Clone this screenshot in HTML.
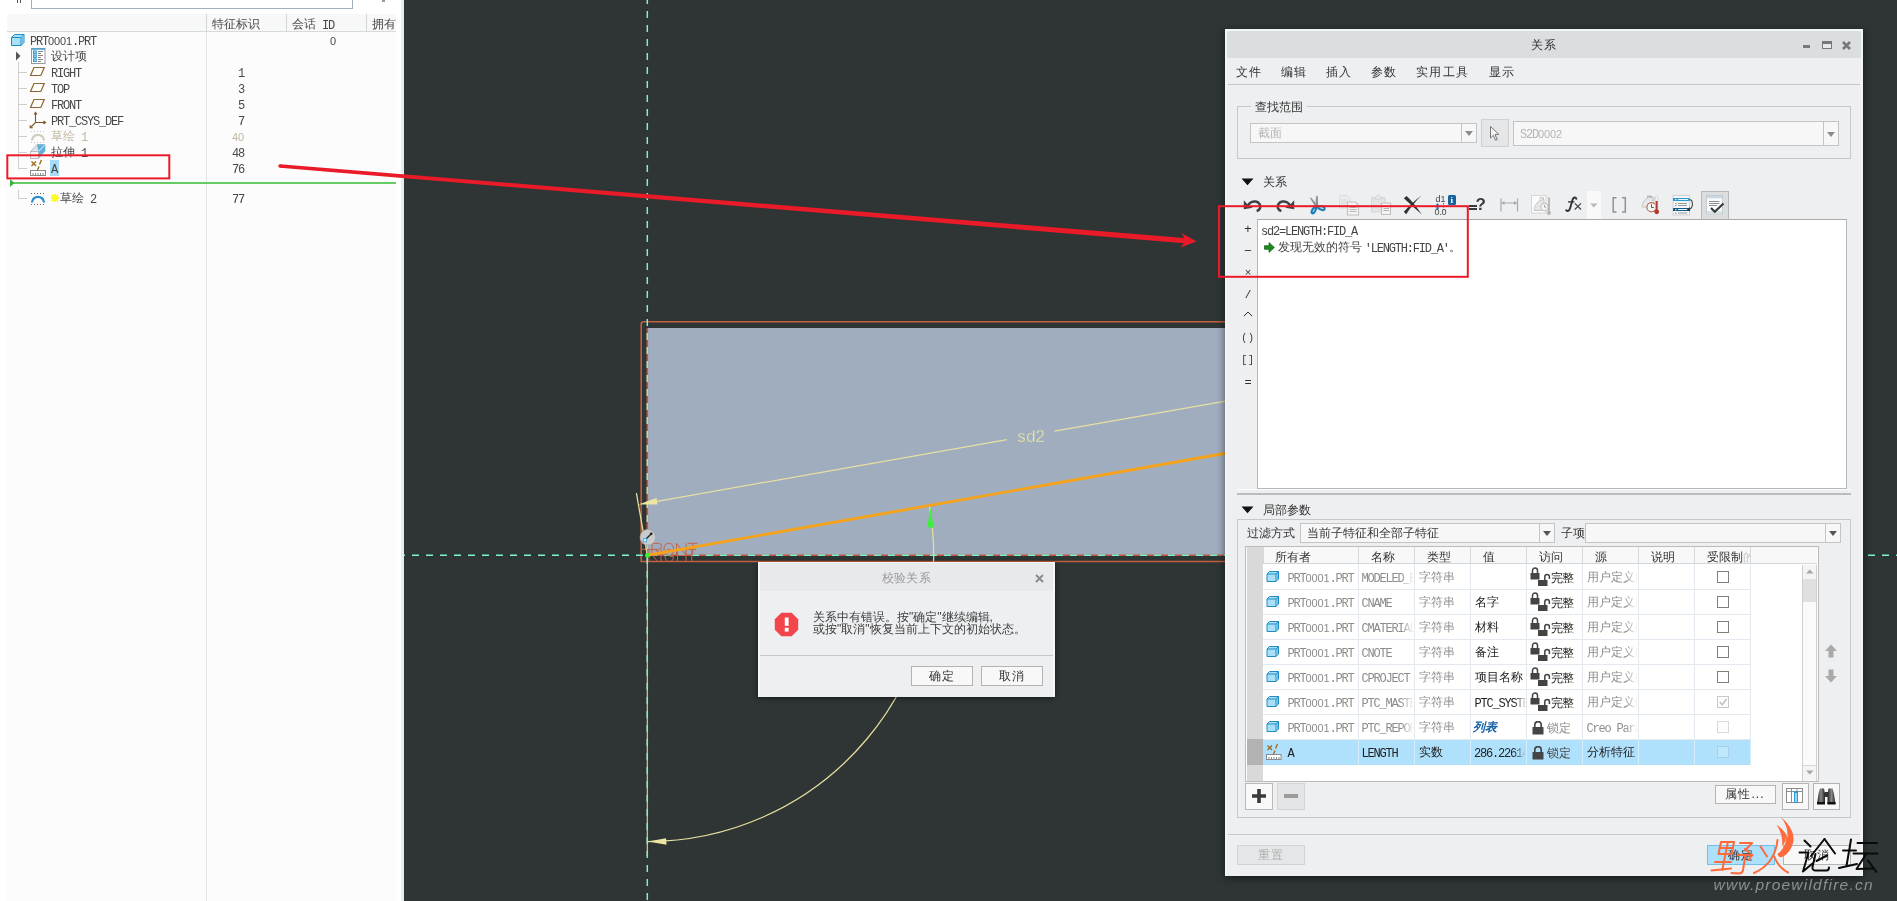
<!DOCTYPE html>
<html lang="zh">
<head>
<meta charset="utf-8">
<title>Creo - 关系</title>
<style>
*{box-sizing:border-box;margin:0;padding:0}
html,body{width:1897px;height:901px;overflow:hidden;background:#2f3535}
body{will-change:transform;position:relative;font-family:"Liberation Sans",sans-serif;font-size:12px;color:#444;line-height:1}
.abs{position:absolute}
.t{position:absolute;white-space:pre;font-size:12px;line-height:14px;height:14px;color:#484848}
/* condensed mono latin run: 6px advance */
.m{position:relative;top:2px;display:inline-block;font-family:"Liberation Mono",monospace;font-size:12px;letter-spacing:-1.2px;white-space:pre;vertical-align:top}
.m i{font-family:"Liberation Sans",sans-serif;font-style:normal;font-size:11px;letter-spacing:-.12px;line-height:0}
.combo .dd.dis:after{border-top-color:#8c8c8c}
/* ---------- left panel ---------- */
#left{position:absolute;left:0;top:0;width:404px;height:901px;background:#fff}
#left .inner{position:absolute;left:7px;top:14px;width:389px;height:887px;background:#fcfcfc}
#left .strip{position:absolute;left:401px;top:0;width:3px;height:901px;background:#e6ecec}
#left .hdr{position:absolute;left:7px;top:14px;width:389px;height:18px;background:#f8f8f8;border-bottom:1px solid #d5dada}
#left .vs{position:absolute;top:14px;width:1px;background:#dde3e6}
/* ---------- dialogs ---------- */
.dlg{position:absolute;background:#eeeff1}
.btn{position:absolute;border:1px solid #b4b4b4;background:#f8f8f8;text-align:center;font-size:12px;color:#333}
.gb{position:absolute;border:1px solid #c6c8ca}
.combo{position:absolute;border:1px solid #c2c4c6;background:#f7f7f7}
.combo .dd{position:absolute;right:0;top:0;bottom:0;width:15px;border-left:1px solid #c2c4c6}
.combo .dd:after{content:"";position:absolute;left:3px;top:50%;margin-top:-2px;border:4px solid transparent;border-top:5px solid #555;border-bottom:0}
</style>
</head>
<body>

<!-- ================= LEFT MODEL TREE ================= -->
<div id="left">
  <div class="inner"></div>
  <div class="strip"></div>
  <!-- top search box remnants -->
  <div class="abs" style="left:31px;top:-10px;width:322px;height:19px;border:1px solid #9db3b8;background:#fff"></div>
  <div class="abs" style="left:17px;top:0;width:1px;height:3px;background:#555"></div>
  <div class="abs" style="left:20px;top:0;width:1px;height:3px;background:#555"></div>
  <div class="abs" style="left:382px;top:0;width:3px;height:2px;background:#999"></div>
  <!-- header -->
  <div class="hdr"></div>
  <div class="vs" style="left:206px;height:887px"></div>
  <div class="vs" style="left:286px;height:18px;background:#d0d6d8"></div>
  <div class="vs" style="left:366px;height:18px;background:#d0d6d8"></div>
  <div class="vs" style="left:206px;height:18px;background:#d0d6d8"></div>
  <div class="t" style="left:212px;top:17px">特征标识</div>
  <div class="t" style="left:292px;top:17px">会话<span class="m"> ID</span></div>
  <div class="t" style="left:372px;top:17px">拥有</div>

  <!-- tree lines -->
  <div class="abs" style="left:18px;top:62px;width:1px;height:107px;background:#cfcfcf"></div>
  <div class="abs" style="left:18px;top:72px;width:9px;height:1px;background:#cfcfcf"></div>
  <div class="abs" style="left:18px;top:88px;width:9px;height:1px;background:#cfcfcf"></div>
  <div class="abs" style="left:18px;top:104px;width:9px;height:1px;background:#cfcfcf"></div>
  <div class="abs" style="left:18px;top:120px;width:9px;height:1px;background:#cfcfcf"></div>
  <div class="abs" style="left:18px;top:136px;width:9px;height:1px;background:#cfcfcf"></div>
  <div class="abs" style="left:18px;top:152px;width:9px;height:1px;background:#cfcfcf"></div>
  <div class="abs" style="left:18px;top:168px;width:9px;height:1px;background:#cfcfcf"></div>
  <div class="abs" style="left:18px;top:190px;width:1px;height:9px;background:#cfcfcf"></div>
  <div class="abs" style="left:18px;top:198px;width:9px;height:1px;background:#cfcfcf"></div>

  <!-- row: PRT0001.PRT -->
  <svg class="abs" style="left:10px;top:33px" width="16" height="14" viewBox="0 0 16 14"><path d="M1.5 4.5 L4.5 1.5 L14 1.5 L14 9.5 L11 12.5 L1.5 12.5 Z" fill="#a9e0f7" stroke="#1f8cc4" stroke-width="1"/><path d="M1.5 4.5 L11 4.5 L14 1.5 M11 4.5 L11 12.5" fill="none" stroke="#1f8cc4" stroke-width="1"/><path d="M11.5 4.6 L13.5 2.6 L13.5 9.3 L11.5 11.3Z" fill="#6cc3ea"/></svg>
  <div class="t" style="left:30px;top:33px"><span class="m">PRT<i>0001</i>.PRT</span></div>
  <div class="t" style="left:330px;top:33px"><span class="m"><i>0</i></span></div>

  <!-- row: 设计项 -->
  <svg class="abs" style="left:15px;top:51px" width="6" height="10" viewBox="0 0 6 10"><path d="M1 0.5 L5.5 5 L1 9.5Z" fill="#555"/></svg>
  <svg class="abs" style="left:31px;top:48px" width="15" height="16" viewBox="0 0 15 16"><rect x="0.5" y="0.5" width="13.5" height="15" fill="#fff" stroke="#9a9a9a"/><rect x="0.5" y="0.5" width="13.5" height="1.2" fill="#2d9bd6"/><g fill="none" stroke="#2d9bd6" stroke-width="1.2"><rect x="2.6" y="3" width="2.6" height="2.4"/><rect x="2.6" y="7" width="2.6" height="2.4"/><rect x="2.6" y="11" width="2.6" height="2.4"/></g><g stroke="#888" stroke-width="1"><path d="M7 3.5h5M7 5.5h3M7 7.5h5M7 9.5h3M7 11.5h5M7 13.5h3"/></g></svg>
  <div class="t" style="left:51px;top:49px">设计项</div>

  <!-- planes -->
  <svg class="abs" style="left:29px;top:66px" width="17" height="11" viewBox="0 0 17 11"><path d="M5 1.5 L15.3 1.5 L11.8 9.5 L1.5 9.5Z" fill="none" stroke="#8a682d" stroke-width="1.2"/></svg>
  <div class="t" style="left:51px;top:65px"><span class="m">RIGHT</span></div>
  <div class="t" style="left:214px;top:65px;width:30px;text-align:right"><span class="m">1</span></div>

  <svg class="abs" style="left:29px;top:82px" width="17" height="11" viewBox="0 0 17 11"><path d="M5 1.5 L15.3 1.5 L11.8 9.5 L1.5 9.5Z" fill="none" stroke="#8a682d" stroke-width="1.2"/></svg>
  <div class="t" style="left:51px;top:81px"><span class="m">TOP</span></div>
  <div class="t" style="left:214px;top:81px;width:30px;text-align:right"><span class="m">3</span></div>

  <svg class="abs" style="left:29px;top:98px" width="17" height="11" viewBox="0 0 17 11"><path d="M5 1.5 L15.3 1.5 L11.8 9.5 L1.5 9.5Z" fill="none" stroke="#8a682d" stroke-width="1.2"/></svg>
  <div class="t" style="left:51px;top:97px"><span class="m">FRONT</span></div>
  <div class="t" style="left:214px;top:97px;width:30px;text-align:right"><span class="m">5</span></div>

  <!-- csys -->
  <svg class="abs" style="left:29px;top:111px" width="18" height="18" viewBox="0 0 18 18"><g fill="none" stroke="#7a5a22" stroke-width="1.1"><path d="M6.5 2 L6.5 11.5 L16 11.5 M6.5 11.5 L1.5 16.5"/><path d="M5 3.5 L6.5 1.5 L8 3.5 M14.5 10 L16.5 11.5 L14.5 13 M1.2 14.2 L1.2 16.8 L3.8 16.8"/></g></svg>
  <div class="t" style="left:51px;top:113px"><span class="m">PRT_CSYS_DEF</span></div>
  <div class="t" style="left:214px;top:113px;width:30px;text-align:right"><span class="m">7</span></div>

  <!-- 草绘 1 (suppressed/greyed) -->
  <svg class="abs" style="left:30px;top:129px" width="16" height="15" viewBox="0 0 16 15"><path d="M1.800 11.500 C3.500 4 12.500 4 14.200 11.500" fill="none" stroke="#d2cdc0" stroke-width="2.200"/><path d="M1 2.5h14M1 13.5h14" stroke="#c8c8c8" stroke-width="1" stroke-dasharray="1 2"/></svg>
  <div class="t" style="left:51px;top:129px;color:#c2b8a2">草绘<span class="m"> 1</span></div>
  <div class="t" style="left:214px;top:129px;width:30px;text-align:right;color:#c2b8a2"><span class="m"><i>40</i></span></div>

  <!-- 拉伸 1 -->
  <svg class="abs" style="left:29px;top:143px" width="17" height="17" viewBox="0 0 17 17"><path d="M1.5 8.5 L8 1.5 L16 1.5 L16 8 L9.5 15.5 L1.5 15.5Z" fill="#dfe4e8" stroke="#b5bcc2"/><path d="M8 1.5 L16 1.5 L16 8 L9.5 15 L9.5 8.5Z" fill="#5fb1d9"/><path d="M1.5 8.5 L9.5 8.5 L16 1.5" fill="none" stroke="#fff" stroke-width=".8"/><rect x="1.5" y="8.5" width="8" height="7" fill="#f3f5f7" stroke="#b5bcc2"/></svg>
  <div class="t" style="left:51px;top:145px">拉伸<span class="m"> 1</span></div>
  <div class="t" style="left:214px;top:145px;width:30px;text-align:right"><span class="m">48</span></div>

  <!-- A (analysis feature, selected) -->
  <svg class="abs" style="left:30px;top:159px" width="17" height="18" viewBox="0 0 17 18"><g stroke="#9a6a1e" stroke-width="1.4" fill="none"><path d="M1.5 2.5 L6 7 M6 2.5 L1.5 7"/><path d="M11.5 1 L9.5 5.5 M9 7.5 L7.5 11"/></g><rect x="0.5" y="11.5" width="15" height="5" fill="#fff" stroke="#8a8a8a"/><path d="M3 14v2.5M5.5 14v2.5M8 14v2.5M10.500 14v2.500M13 14v2.500" stroke="#8a8a8a" stroke-width="1"/></svg>
  <div class="abs" style="left:50px;top:160px;width:9px;height:16px;background:#a6dcf7"></div>
  <div class="t" style="left:51px;top:161px"><span class="m">A</span></div>
  <div class="t" style="left:214px;top:161px;width:30px;text-align:right"><span class="m">76</span></div>

  <!-- insert-here green line -->
  <div class="abs" style="left:10px;top:182px;width:386px;height:2px;background:#68cc64"></div>
  <svg class="abs" style="left:10px;top:179px" width="5" height="8" viewBox="0 0 5 8"><path d="M0 0 L4.500 4 L0 8Z" fill="#3fb43f"/></svg>

  <!-- 草绘 2 -->
  <svg class="abs" style="left:30px;top:191px" width="16" height="15" viewBox="0 0 16 15"><path d="M1.800 11.500 C3.500 4 12.500 4 14.200 11.500" fill="none" stroke="#2d8ecb" stroke-width="2.200"/><path d="M1 2.5h14M1 13.5h14" stroke="#666" stroke-width="1" stroke-dasharray="1 2"/></svg>
  <svg class="abs" style="left:51px;top:194px" width="8" height="8" viewBox="0 0 8 8"><g stroke="#8a8a00" stroke-width="1.600" opacity=".35"><path d="M4 0v8M0 4h8M1 1l6 6M7 1l-6 6"/></g><g stroke="#ffff10" stroke-width="1.600"><path d="M4 0v8M0 4h8M1 1l6 6M7 1l-6 6"/></g></svg>
  <div class="t" style="left:60px;top:191px">草绘<span class="m"> 2</span></div>
  <div class="t" style="left:214px;top:191px;width:30px;text-align:right"><span class="m">77</span></div>
</div>

<!-- ================= CANVAS ================= -->
<svg id="canvas" class="abs" style="left:0;top:0" width="1897" height="901" viewBox="0 0 1897 901">
  <!-- extruded face -->
  <rect x="648" y="328" width="600" height="227.500" fill="#a0adbe"/>
  <!-- sketch reference outline -->
  <path d="M1250 321.700 H643.600 Q641.200 321.700 641.200 324.100 V561.500 H1250" fill="none" stroke="#c0603f" stroke-width="1.600"/>
  <!-- rect edges coincident with datum planes -->
  <path d="M647.300 328 V555.200 H1250" fill="none" stroke="#c4553a" stroke-width="1.600"/>
  <path d="M647.300 555 V856" stroke="#d9d294" stroke-width="1.200"/>
  <!-- datum planes (dashed) -->
  <path d="M647.300 0 V901" fill="none" stroke="#7ff0d0" stroke-width="1.500" stroke-dasharray="7 7" stroke-dashoffset="3"/>
  <path d="M404 555.300 H1897" fill="none" stroke="#7ff0d0" stroke-width="1.500" stroke-dasharray="7 7" stroke-dashoffset="6"/>
  <!-- FRONT / RIGHT datum tags -->
  <g fill="none" stroke="#c4654a" stroke-width="1"><title>FRONT RIGHT</title>
    <path d="M641.5 555.3V543.3H651.0M641.5 549.3H649.0 M652 555.3V543.3H658.5Q661.5 543.3 661.5 546.3Q661.5 549.3 658.5 549.3H652M656.275 549.3L661.5 555.3 M668.75 543.3Q673.5 543.3 673.5 549.3Q673.5 555.3 668.75 555.3Q664 555.3 664 549.3Q664 543.3 668.75 543.3Z M676.5 555.3V543.3L686.0 555.3V543.3 M688 543.3H697.5M692.75 543.3V555.3"/>
    <path d="M649 561.5V549.5H654.5Q657.5 549.5 657.5 552.5Q657.5 555.5 654.5 555.5H649M652.825 555.5L657.5 561.5 M661 549.5V561.5 M673.5 552.5Q672.5 549.5 669.25 549.5Q665 549.5 665 555.5Q665 561.5 669.25 561.5Q673.5 561.5 673.5 556.5H670.25 M677.5 549.5V561.5M686.0 549.5V561.5M677.5 555.5H686.0 M687.5 549.5H696.0M691.75 549.5V561.5"/>
  </g>
  <!-- vertical solid axis segment below origin -->
  <!-- dimension sd2 -->
  <g stroke="#e6e0a0" stroke-width="1.250" fill="none">
    <path d="M647.3 555.2 L636.4 493.2"/>
    <path d="M657.1 501.3 L1007.0 439.6 M1054.5 431.2 L1230.0 400.3"/>
    <path d="M929.3 505.5 A286.3 286.3 0 0 1 647.3 841.5"/>
  </g>
  <path d="M638.4 504.6 L656.5 498.1 L657.6 504.4Z" fill="#ece6a0"/>
  <path d="M647.800 841.400 L666 838.200 L666.600 844.800Z" fill="#ece6a0"/>
  <text x="1017.200 1026.300 1035.600" y="442.400" font-family="Liberation Sans, sans-serif" font-size="16.800" fill="#f2eca2" stroke="#a0adbe" stroke-width=".38">sd2</text>
  <!-- sketched line (selected) -->
  <path d="M647.3 555.2 L1230.0 452.5" stroke="#f5a31c" stroke-width="2.900" stroke-linecap="round"/>
  <!-- green arrow on arc start -->
  <path d="M930.600 507.500 L933.500 528 L927.300 527Z" fill="#3af03a"/>
  <!-- origin point -->
  <circle cx="647.300" cy="555.400" r="2.300" fill="#2ff52f"/>
  <!-- constraint badge -->
  <circle cx="647.800" cy="537.300" r="7.800" fill="#c9cbcd" stroke="#9ea0a2" stroke-width=".6"/>
  <path d="M644.800 540.300 L651 534" stroke="#222" stroke-width="1.300"/>
  <circle cx="651.200" cy="533.800" r="1.400" fill="#222"/>
  <rect x="643.300" y="538.700" width="3.200" height="3.200" fill="#eaf6ff" stroke="#38a4e0" stroke-width=".9"/>
</svg>

<!-- ================= MESSAGE DIALOG ================= -->
<div id="msg" class="dlg" style="left:758px;top:562px;width:297px;height:135px;background:#eeeff1;box-shadow:0 1px 5px rgba(0,0,0,.55);border:1px solid #f6f6f6;border-width:1px 2px 0 2px">
  <div class="abs" style="left:0;top:0;width:293px;height:28px;background:#e8e9eb"></div>
  <div class="t" style="left:0;top:8px;width:293px;text-align:center;color:#9a9a9a;letter-spacing:.3px;font-size:12px">校验关系</div>
  <svg class="abs" style="left:275px;top:11px" width="9" height="9" viewBox="0 0 9 9"><path d="M1 1L8 8M8 1L1 8" stroke="#8c8c8c" stroke-width="2"/></svg>
  <svg class="abs" style="left:14.200px;top:48.500px" width="25" height="25" viewBox="0 0 25 25"><path d="M7.300 0.800H17.700L24.200 7.300V17.700L17.700 24.200H7.300L0.800 17.700V7.300Z" fill="#f2464c"/><rect x="10.800" y="5.500" width="3.800" height="8.300" fill="#fff"/><rect x="10.800" y="15.800" width="3.800" height="3.800" fill="#fff"/></svg>
  <div class="t" style="left:53px;top:47px;color:#3c3c3c">关系中有错误。按"确定"继续编辑,</div>
  <div class="t" style="left:53px;top:59px;color:#3c3c3c">或按"取消"恢复当前上下文的初始状态。</div>
  <div class="abs" style="left:0;top:92px;width:293px;height:1px;background:#c4c6c8"></div>
  <div class="btn" style="left:151px;top:103px;width:62px;height:20px;line-height:18px;letter-spacing:1px">确定</div>
  <div class="btn" style="left:221px;top:103px;width:62px;height:20px;line-height:18px;letter-spacing:1px">取消</div>
</div>

<!-- ================= RELATIONS DIALOG ================= -->
<div id="rel" class="dlg" style="left:1225px;top:29px;width:638px;height:847px;box-shadow:inset 2px 0 #f3f4f5,inset -2px 0 #f3f4f5,inset 0 2px #f3f4f5,0 2px 8px rgba(0,0,0,.55)"><div class="abs" style="left:1px;top:1px;width:636px;height:845px">
  <div class="abs" style="left:1px;top:1px;width:634px;height:27px;background:#dbdee0"></div>
  <div class="t" style="left:2px;top:8px;width:632px;text-align:center;color:#333;letter-spacing:1px">关系</div>
  <div class="abs" style="left:577px;top:15px;width:7px;height:3px;background:#77787c"></div>
  <div class="abs" style="left:596px;top:11px;width:10px;height:8px;border:1px solid #77787c;border-top-width:3px;background:#e8e9ea"></div>
  <svg class="abs" style="left:616px;top:11px" width="9" height="9" viewBox="0 0 9 9"><path d="M1 1L8 8M8 1L1 8" stroke="#77787c" stroke-width="2.700"/></svg>
  <div class="t" style="left:9.5px;top:34.5px;color:#333;letter-spacing:1.6px">文件</div>
  <div class="t" style="left:54.5px;top:34.5px;color:#333;letter-spacing:1.6px">编辑</div>
  <div class="t" style="left:99.5px;top:34.5px;color:#333;letter-spacing:1.6px">插入</div>
  <div class="t" style="left:144.5px;top:34.5px;color:#333;letter-spacing:1.6px">参数</div>
  <div class="t" style="left:189.5px;top:34.5px;color:#333;letter-spacing:1.6px">实用工具</div>
  <div class="t" style="left:262.5px;top:34.5px;color:#333;letter-spacing:1.6px">显示</div>
  <div class="abs" style="left:2px;top:54px;width:632px;height:1px;background:#c6c8c9"></div>
  <div class="gb" style="left:11px;top:76px;width:614px;height:53px;"></div>
  <div class="t" style="left:25px;top:69.5px;background:#eeeff1;padding:0 4px;color:#333">查找范围</div>
  <div class="combo" style="left:24px;top:93px;width:227px;height:20px;"><div class="dd dis"></div></div>
  <div class="t" style="left:32px;top:96px;color:#b4b4b4">截面</div>
  <div class="abs" style="left:255px;top:89px;width:28px;height:28px;background:#e5e6e8;border:1px solid #cfd1d3"></div>
  <svg class="abs" style="left:262px;top:95px" width="13" height="17" viewBox="0 0 13 17"><path d="M2.500 1.500 L2.500 13 L5.300 10.300 L7.600 15.300 L9.300 14.500 L7 9.600 L10.800 9.300Z" fill="#f4f4f4" stroke="#777" stroke-width="1" stroke-linejoin="round"/></svg>
  <div class="combo" style="left:287px;top:91px;width:326px;height:25px;"><div class="dd dis"></div></div>
  <div class="t" style="left:294px;top:95.500px;color:#b4b4b4"><span class="m">S2D<i>0002</i></span></div>
  <svg class="abs" style="left:15px;top:148px" width="13" height="8" viewBox="0 0 13 8"><path d="M0.500 0.500H12.500L6.500 7.300Z" fill="#111"/></svg>
  <div class="t" style="left:36.5px;top:145px;color:#333">关系</div>
  <svg class="abs" style="left:17px;top:168px" width="20" height="14" viewBox="0 0 20 14"><path d="M4.500 8.500 C6 4.800 9.500 3 12.800 3.500 C16.300 4.200 18 7.500 17 10.200 C16.300 11.800 15 12.700 13.600 13" fill="none" stroke="#3d4244" stroke-width="2.500"/><path d="M0.800 2.200 L0.800 11.200 L9.800 9.800 L5.500 7.600Z" fill="#3d4244"/></svg>
  <svg class="abs" style="left:49px;top:168px" width="20" height="14" viewBox="0 0 20 14"><g transform="translate(20,0) scale(-1,1)"><path d="M4.500 8.500 C6 4.800 9.500 3 12.800 3.500 C16.300 4.200 18 7.500 17 10.200 C16.300 11.800 15 12.700 13.600 13" fill="none" stroke="#3d4244" stroke-width="2.500"/><path d="M0.800 2.200 L0.800 11.200 L9.800 9.800 L5.500 7.600Z" fill="#3d4244"/></g></svg>
  <svg class="abs" style="left:82px;top:165px" width="19" height="20" viewBox="0 0 19 20"><path d="M2 3 L3 2.600 L9.800 10.500 L8.200 12.300 L6.500 10.500Z" fill="#8d9295"/><path d="M8.300 0.800 L9.800 0.800 L10.200 11.500 L8.200 12 L7.600 6Z" fill="#8d9295"/><path d="M8.300 11.300 C6 12.500 3.800 15 3.600 17 C3.500 19 5.800 18.800 6.800 16.600 C7.600 14.800 8.500 13 9.200 11.800" fill="none" stroke="#1b7fb5" stroke-width="2.200"/><path d="M9.300 11.300 C11 11.500 13.200 10.800 15 11.600 C16.800 12.500 17.200 14.300 15.600 14.900 C13.500 15.500 11 13.800 9.600 12.200" fill="none" stroke="#1b7fb5" stroke-width="2.200"/></svg>
  <svg class="abs" style="left:113px;top:165px" width="21" height="21" viewBox="0 0 21 21"><path d="M0.500 0.500 H8 L11 3.500 V13 H0.500Z" fill="#ececec" stroke="#dcdcdc"/><path d="M2 5h6M2 7h6M2 9h5" stroke="#dadada"/><path d="M8.500 7 H16.500 L19.500 10 V20 H8.500Z" fill="#f4f4f4" stroke="#c2c2c2" stroke-width="1.100"/><path d="M10.500 12.500h7M10.500 14.500h7M10.500 16.500h7" stroke="#b8b8b8"/></svg>
  <svg class="abs" style="left:145px;top:164px" width="21" height="22" viewBox="0 0 21 22"><rect x="0.500" y="3.500" width="13.500" height="14.500" fill="#e4e4e4" stroke="#d6d6d6"/><path d="M4 3.500 L7.300 0.800 L10.600 3.500 L11.500 5 H3Z" fill="#e9e9e9" stroke="#d2d2d2"/><path d="M10.500 9 H19.500 V20.500 H10.500Z" fill="#f4f4f4" stroke="#c0c0c0" stroke-width="1.100"/><path d="M12.500 12.500h5.500M12.500 14.500h5.500M12.500 16.500h5.500" stroke="#b4b4b4"/></svg>
  <svg class="abs" style="left:177px;top:165px" width="20" height="21" viewBox="0 0 20 21"><path d="M0.800 3.200 L3.600 0.900 C8.500 5.500 14 12 18.800 19.600 C12.500 14 6.500 8.500 0.800 3.200Z" fill="#333"/><path d="M18.600 0.400 C12 5 5.500 11.500 0.800 16.800 L3.200 19.200 C7.500 12.500 12.500 6 18.600 0.400Z" fill="#333"/></svg>
  <div class="abs" style="left:209.5px;top:164px;font:9px/10px 'Liberation Sans',sans-serif;color:#444;letter-spacing:0">d1</div>
  <div class="abs" style="left:222px;top:165px;width:7.5px;height:9.5px;background:#14639a;border-radius:1.500px;color:#fff;font:bold 9px/10px 'Liberation Serif',serif;text-align:center">i</div>
  <svg class="abs" style="left:209px;top:173px" width="12" height="7" viewBox="0 0 12 7"><path d="M2.500 0 L4.500 2.500 H0.500Z M2.500 7 L4.500 4.500 H0.500Z" fill="#1b7fb5"/><path d="M2.500 2 V5" stroke="#1b7fb5"/><path d="M8.500 0 V7" stroke="#1b7fb5" stroke-dasharray="1.500 1.500"/></svg>
  <div class="abs" style="left:208.5px;top:178px;font:9px/9px 'Liberation Sans',sans-serif;color:#444;letter-spacing:-.3px">0.0</div>
  <div class="abs" style="left:243px;top:174.500px;width:8px;height:2px;background:#3a3a3a"></div><div class="abs" style="left:243px;top:177.800px;width:8px;height:2px;background:#3a3a3a"></div><div class="abs" style="left:249.500px;top:165.500px;font:bold 17px/17px 'Liberation Sans',sans-serif;color:#3a3a3a">?</div>
  <svg class="abs" style="left:274px;top:168px" width="19" height="14" viewBox="0 0 19 14"><path d="M1 0.500 V13.500 M17.500 0.500 V13.500" stroke="#a9a9a9" stroke-width="1.200"/><path d="M2 5 H16.500" stroke="#a9a9a9"/><path d="M1.500 5 L4.500 3 V7Z M17 5 L14 3 V7Z" fill="#a9a9a9"/></svg>
  <svg class="abs" style="left:305px;top:165px" width="21" height="21" viewBox="0 0 21 21"><rect x="0.500" y="0.500" width="14.500" height="17.500" fill="#fbfbfb" stroke="#d6d6d6"/><path d="M3 15.500 C4 9 7 5 13 4.500 V15.500Z" fill="#e6e6e6" stroke="#c8c8c8"/><path d="M9 4.500 V2.800 H12.500 V4.500" fill="none" stroke="#bbb"/><circle cx="13.500" cy="12" r="3.800" fill="#f3f3f3" stroke="#c0c0c0"/><path d="M13.500 9.800 V12.200 H15.200" fill="none" stroke="#aaa"/><path d="M18 2.500 V17" stroke="#b4b4b4" stroke-width="1.800"/><circle cx="18" cy="18" r="1.900" fill="#b0b0b0"/></svg>
  <svg class="abs" style="left:339px;top:166px" width="13" height="17" viewBox="0 0 13 17"><title>f</title><path d="M11.300 2.800 C10.800 1 8.400 1 7.600 3.600 L5 12.600 C4.300 15.200 2.300 15.600 1.200 14.200" fill="none" stroke="#333" stroke-width="1.900" stroke-linecap="round"/><path d="M3 5.900 H9.400" stroke="#333" stroke-width="1.300"/></svg>
  <svg class="abs" style="left:347px;top:172px" width="9" height="9" viewBox="0 0 9 9"><path d="M1.800 1.300L8 7.500M8 1.300L1.800 7.500" stroke="#444" stroke-width="1.200"/></svg>
  <div class="abs" style="left:361px;top:161px;width:13.5px;height:28px;background:#f9f9f9"></div>
  <svg class="abs" style="left:364px;top:173px" width="8" height="5" viewBox="0 0 8 5"><path d="M0 0.500H7.500L3.750 4.500Z" fill="#b8b8b8"/></svg>
  <svg class="abs" style="left:386px;top:167px" width="15" height="16" viewBox="0 0 15 16"><path d="M4.500 0.800 H1.200 V15 H4.500 M10 0.800 H13.300 V15 H10" fill="none" stroke="#929292" stroke-width="1.500"/></svg>
  <svg class="abs" style="left:415px;top:165px" width="20" height="20" viewBox="0 0 20 20"><path d="M1 12 C2 6 5 2.500 10 2.500 L13 2.500 V12Z" fill="#e9e9e9" stroke="#c4c4c4"/><path d="M6.500 2.500 V1.200 H10.500 V2.500" fill="none" stroke="#a0a0a0"/><path d="M10 6 L13.500 2.500 V6Z" fill="#c8d0d6"/><circle cx="10.500" cy="12.200" r="4.600" fill="#f6f6f6" stroke="#b3614a" stroke-width="1.100"/><path d="M10.500 9.300 V12.500 H12.800" fill="none" stroke="#555" stroke-width="1"/><rect x="14.300" y="1" width="2.600" height="14" rx="1.300" fill="#f2f2f2" stroke="#c7c7c7" stroke-width=".6"/><rect x="14.700" y="6" width="1.900" height="10" fill="#b8332c"/><circle cx="15.700" cy="16.800" r="2.400" fill="#b8332c"/></svg>
  <svg class="abs" style="left:446px;top:165px" width="22" height="21" viewBox="0 0 22 21"><rect x="1" y="0.500" width="16.500" height="19.500" fill="#f4f6f7" stroke="#cdd2d5"/><rect x="1" y="3" width="16.500" height="3" fill="#2a9bd6"/><rect x="1" y="13" width="16.500" height="3" fill="#0f5b8c"/><path d="M6 4.500h10M6 14.500h10" stroke="#e8f4fb" stroke-width="1"/><path d="M6 8.500h9M6 10.500h9M6 18h9" stroke="#9a9a9a"/><g fill="#fff"><rect x="3.200" y="4" width="1.200" height="1.200"/><rect x="3.200" y="14" width="1.200" height="1.200"/></g><g fill="#888"><rect x="3.200" y="8" width="1.200" height="1.200"/><rect x="3.200" y="10" width="1.200" height="1.200"/><rect x="3.200" y="17.500" width="1.200" height="1.200"/></g><path d="M17.500 4.500 C21.500 5 21.500 13.500 17 14.300" fill="none" stroke="#444" stroke-width="1.100"/><path d="M14.800 14.500 L18 12.300 V16.600Z" fill="#333"/></svg>
  <div class="abs" style="left:475px;top:161px;width:28px;height:28.5px;background:#dcdddf;border:1px solid #b6b8ba"></div>
  <svg class="abs" style="left:480px;top:165px" width="20" height="20" viewBox="0 0 20 20"><rect x="0.500" y="0.500" width="16" height="18.500" fill="#f8fafb" stroke="#c5cbd0"/><rect x="1" y="1" width="15" height="2.300" fill="#c8d9e4"/><path d="M3 6.500h10.500M3 8.500h10.500M3 10.500h8" stroke="#8f8f8f"/><path d="M1 16 h15 v2.500 h-15z" fill="#d6e2ea"/><path d="M5 13 L8.800 16.800 L17.500 8.500" fill="none" stroke="#3a3a3a" stroke-width="2.200"/></svg>
  <div class="abs" style="left:31px;top:189px;width:590px;height:269.500px;background:#fff;border:1px solid #b4b7b9;border-top-color:#a8abad"></div>
  <div class="abs" style="left:12px;top:191.8px;width:20px;height:16px;text-align:center;font:13px/16px 'Liberation Mono',monospace;color:#333;letter-spacing:0">+</div>
  <div class="abs" style="left:12px;top:213.7px;width:20px;height:16px;text-align:center;font:13px/16px 'Liberation Mono',monospace;color:#333;letter-spacing:0">−</div>
  <div class="abs" style="left:12px;top:234.6px;width:20px;height:16px;text-align:center;font:11px/16px 'Liberation Mono',monospace;color:#333;letter-spacing:0">×</div>
  <div class="abs" style="left:12px;top:257px;width:20px;height:16px;text-align:center;font:11px/16px 'Liberation Mono',monospace;color:#333;letter-spacing:0">/</div>
  <svg class="abs" style="left:17px;top:280.5px" width="10" height="6" viewBox="0 0 10 6"><title>^</title><path d="M0.800 5.200 L5 1 L9.200 5.200" fill="none" stroke="#333" stroke-width="1"/></svg>
  <div class="abs" style="left:12px;top:301px;width:20px;height:16px;text-align:center;font:10px/16px 'Liberation Mono',monospace;color:#333;letter-spacing:.8px">()</div>
  <div class="abs" style="left:12px;top:323px;width:20px;height:16px;text-align:center;font:10px/16px 'Liberation Mono',monospace;color:#333;letter-spacing:.8px">[]</div>
  <div class="abs" style="left:12px;top:345px;width:20px;height:16px;text-align:center;font:12px/16px 'Liberation Mono',monospace;color:#333;letter-spacing:0">=</div>
  <div class="t" style="left:35px;top:193px;color:#444"><span class="m">sd2=LENGTH:FID_A</span></div>
  <svg class="abs" style="left:38px;top:211.500px" width="11" height="11" viewBox="0 0 11 11"><path d="M0.500 3.700 H5 V0.600 L10.400 5.500 L5 10.400 V7.300 H0.500Z" fill="#1e8a1e" stroke="#0c5c0c" stroke-width=".7"/></svg>
  <div class="t" style="left:51.500px;top:209.500px;color:#444">发现无效的符号 <span class="m">'LENGTH:FID_A'</span>。</div>
  <div class="abs" style="left:11px;top:459px;width:614px;height:1px;background:#fafdfe"></div>
  <div class="abs" style="left:11px;top:463px;width:614px;height:2px;background:#b9bdbd"></div>
  <svg class="abs" style="left:15px;top:476px" width="13" height="8" viewBox="0 0 13 8"><path d="M0.500 0.500H12.500L6.500 7.300Z" fill="#111"/></svg>
  <div class="t" style="left:36.5px;top:472.5px;color:#333">局部参数</div>
  <div class="gb" style="left:11px;top:489px;width:614px;height:298.5px;"></div>
  <div class="t" style="left:21px;top:496px;color:#333">过滤方式</div>
  <div class="combo" style="left:73.5px;top:493px;width:255px;height:19.5px;"><div class="dd"></div></div>
  <div class="t" style="left:81px;top:496px;color:#333">当前子特征和全部子特征</div>
  <div class="t" style="left:335px;top:496px;color:#333">子项</div>
  <div class="combo" style="left:359px;top:493px;width:256px;height:19.5px;"><div class="dd"></div></div>
  <div class="abs" style="left:19px;top:515.5px;width:574px;height:236.5px;background:#fff;border:1px solid #b9bbbd"></div>
  <div class="abs" style="left:21px;top:517px;width:570px;height:17px;background:#f8f8f8;border-bottom:1px solid #d0d6da"></div>
  <div class="abs" style="left:21px;top:517px;width:16px;height:234px;background:#d9d9d9"></div>
  <div class="abs" style="left:37px;top:517px;width:1px;height:17px;background:#d3d9dd"></div>
  <div class="abs" style="left:132px;top:517px;width:1px;height:17px;background:#d3d9dd"></div>
  <div class="abs" style="left:132px;top:534px;width:1px;height:200px;background:#e3e9ee"></div>
  <div class="abs" style="left:188px;top:517px;width:1px;height:17px;background:#d3d9dd"></div>
  <div class="abs" style="left:188px;top:534px;width:1px;height:200px;background:#e3e9ee"></div>
  <div class="abs" style="left:244px;top:517px;width:1px;height:17px;background:#d3d9dd"></div>
  <div class="abs" style="left:244px;top:534px;width:1px;height:200px;background:#e3e9ee"></div>
  <div class="abs" style="left:300px;top:517px;width:1px;height:17px;background:#d3d9dd"></div>
  <div class="abs" style="left:300px;top:534px;width:1px;height:200px;background:#e3e9ee"></div>
  <div class="abs" style="left:356px;top:517px;width:1px;height:17px;background:#d3d9dd"></div>
  <div class="abs" style="left:356px;top:534px;width:1px;height:200px;background:#e3e9ee"></div>
  <div class="abs" style="left:412px;top:517px;width:1px;height:17px;background:#d3d9dd"></div>
  <div class="abs" style="left:412px;top:534px;width:1px;height:200px;background:#e3e9ee"></div>
  <div class="abs" style="left:468px;top:517px;width:1px;height:17px;background:#d3d9dd"></div>
  <div class="abs" style="left:468px;top:534px;width:1px;height:200px;background:#e3e9ee"></div>
  <div class="abs" style="left:524px;top:517px;width:1px;height:17px;background:#d3d9dd"></div>
  <div class="abs" style="left:524px;top:534px;width:1px;height:200px;background:#e3e9ee"></div>
  <div class="abs" style="left:37px;top:559px;width:488px;height:1px;background:#e3e9ee"></div>
  <div class="abs" style="left:37px;top:584px;width:488px;height:1px;background:#e3e9ee"></div>
  <div class="abs" style="left:37px;top:609px;width:488px;height:1px;background:#e3e9ee"></div>
  <div class="abs" style="left:37px;top:634px;width:488px;height:1px;background:#e3e9ee"></div>
  <div class="abs" style="left:37px;top:659px;width:488px;height:1px;background:#e3e9ee"></div>
  <div class="abs" style="left:37px;top:684px;width:488px;height:1px;background:#e3e9ee"></div>
  <div class="abs" style="left:37px;top:709px;width:488px;height:1px;background:#e3e9ee"></div>
  <div class="abs" style="left:37px;top:734px;width:488px;height:1px;background:#e3e9ee"></div>
  <div class="t" style="left:48.5px;top:520px;color:#333">所有者</div>
  <div class="t" style="left:145px;top:520px;color:#333">名称</div>
  <div class="t" style="left:201px;top:520px;color:#333">类型</div>
  <div class="t" style="left:256.5px;top:520px;color:#333">值</div>
  <div class="t" style="left:312.5px;top:520px;color:#333">访问</div>
  <div class="t" style="left:368.5px;top:520px;color:#333">源</div>
  <div class="t" style="left:424.5px;top:520px;color:#333">说明</div>
  <div class="t" style="left:480.5px;top:520px;color:#333;width:43px;overflow:hidden">受限制<span style="color:#c8c8c8">的</span></div>
  <svg class="abs" style="left:40px;top:540px" width="14" height="13" viewBox="0 0 14 13"><path d="M1 4 L3.500 1.500 L12.500 1.500 L12.500 9 L10 11.500 L1 11.500Z" fill="#a9e0f7" stroke="#1f8cc4"/><path d="M1 4 H10 L12.500 1.500 M10 4 V11.500" fill="none" stroke="#1f8cc4"/><path d="M10.500 4.200 L12 2.700 V8.800 L10.500 10.300Z" fill="#6cc3ea"/></svg>
  <div class="t" style="left:61.5px;top:539.5px;color:#8c8c8c"><span class="m">PRT<i>0001</i>.PRT</span></div>
  <div class="t" style="left:135.5px;top:539.5px;width:52px;overflow:hidden;color:#8c8c8c;-webkit-mask-image:linear-gradient(90deg,#000 75%,transparent 100%);mask-image:linear-gradient(90deg,#000 75%,transparent 100%);"><span class="m">MODELED_B</span></div>
  <div class="t" style="left:192.5px;top:539.5px;color:#8c8c8c">字符串</div>
  <svg class="abs" style="left:303.5px;top:537px" width="21" height="20" viewBox="0 0 21 20"><rect x="0.500" y="6" width="9" height="6.500" fill="#444"/><path d="M2.500 6 V3.500 A2.500 2.500 0 0 1 7.500 3.500 V6" fill="none" stroke="#444" stroke-width="1.500"/><rect x="8" y="13" width="9.500" height="6" fill="#444"/><path d="M14.800 13 V9.800 A2.300 2.300 0 0 1 19.400 9.800 V12" fill="none" stroke="#444" stroke-width="1.500"/></svg>
  <div class="t" style="left:324.5px;top:540.5px;color:#222;letter-spacing:-.5px">完整</div>
  <div class="t" style="left:360.5px;top:539.5px;width:51px;overflow:hidden;color:#8c8c8c;-webkit-mask-image:linear-gradient(90deg,#000 75%,transparent 100%);mask-image:linear-gradient(90deg,#000 75%,transparent 100%);">用户定义的</div>
  <div class="abs" style="left:491px;top:540.5px;width:12px;height:12px;background:#fff;border:1px solid #7f7f7f"></div>
  <svg class="abs" style="left:40px;top:565px" width="14" height="13" viewBox="0 0 14 13"><path d="M1 4 L3.500 1.500 L12.500 1.500 L12.500 9 L10 11.500 L1 11.500Z" fill="#a9e0f7" stroke="#1f8cc4"/><path d="M1 4 H10 L12.500 1.500 M10 4 V11.500" fill="none" stroke="#1f8cc4"/><path d="M10.500 4.200 L12 2.700 V8.800 L10.500 10.300Z" fill="#6cc3ea"/></svg>
  <div class="t" style="left:61.5px;top:564.5px;color:#8c8c8c"><span class="m">PRT<i>0001</i>.PRT</span></div>
  <div class="t" style="left:135.5px;top:564.5px;width:52px;overflow:hidden;color:#8c8c8c;"><span class="m">CNAME</span></div>
  <div class="t" style="left:192.5px;top:564.5px;color:#8c8c8c">字符串</div>
  <div class="t" style="left:248.5px;top:564.5px;width:52px;overflow:hidden;color:#222;">名字</div>
  <svg class="abs" style="left:303.5px;top:562px" width="21" height="20" viewBox="0 0 21 20"><rect x="0.500" y="6" width="9" height="6.500" fill="#444"/><path d="M2.500 6 V3.500 A2.500 2.500 0 0 1 7.500 3.500 V6" fill="none" stroke="#444" stroke-width="1.500"/><rect x="8" y="13" width="9.500" height="6" fill="#444"/><path d="M14.800 13 V9.800 A2.300 2.300 0 0 1 19.400 9.800 V12" fill="none" stroke="#444" stroke-width="1.500"/></svg>
  <div class="t" style="left:324.5px;top:565.5px;color:#222;letter-spacing:-.5px">完整</div>
  <div class="t" style="left:360.5px;top:564.5px;width:51px;overflow:hidden;color:#8c8c8c;-webkit-mask-image:linear-gradient(90deg,#000 75%,transparent 100%);mask-image:linear-gradient(90deg,#000 75%,transparent 100%);">用户定义的</div>
  <div class="abs" style="left:491px;top:565.5px;width:12px;height:12px;background:#fff;border:1px solid #7f7f7f"></div>
  <svg class="abs" style="left:40px;top:590px" width="14" height="13" viewBox="0 0 14 13"><path d="M1 4 L3.500 1.500 L12.500 1.500 L12.500 9 L10 11.500 L1 11.500Z" fill="#a9e0f7" stroke="#1f8cc4"/><path d="M1 4 H10 L12.500 1.500 M10 4 V11.500" fill="none" stroke="#1f8cc4"/><path d="M10.500 4.200 L12 2.700 V8.800 L10.500 10.300Z" fill="#6cc3ea"/></svg>
  <div class="t" style="left:61.5px;top:589.5px;color:#8c8c8c"><span class="m">PRT<i>0001</i>.PRT</span></div>
  <div class="t" style="left:135.5px;top:589.5px;width:52px;overflow:hidden;color:#8c8c8c;-webkit-mask-image:linear-gradient(90deg,#000 75%,transparent 100%);mask-image:linear-gradient(90deg,#000 75%,transparent 100%);"><span class="m">CMATERIAL</span></div>
  <div class="t" style="left:192.5px;top:589.5px;color:#8c8c8c">字符串</div>
  <div class="t" style="left:248.5px;top:589.5px;width:52px;overflow:hidden;color:#222;">材料</div>
  <svg class="abs" style="left:303.5px;top:587px" width="21" height="20" viewBox="0 0 21 20"><rect x="0.500" y="6" width="9" height="6.500" fill="#444"/><path d="M2.500 6 V3.500 A2.500 2.500 0 0 1 7.500 3.500 V6" fill="none" stroke="#444" stroke-width="1.500"/><rect x="8" y="13" width="9.500" height="6" fill="#444"/><path d="M14.800 13 V9.800 A2.300 2.300 0 0 1 19.400 9.800 V12" fill="none" stroke="#444" stroke-width="1.500"/></svg>
  <div class="t" style="left:324.5px;top:590.5px;color:#222;letter-spacing:-.5px">完整</div>
  <div class="t" style="left:360.5px;top:589.5px;width:51px;overflow:hidden;color:#8c8c8c;-webkit-mask-image:linear-gradient(90deg,#000 75%,transparent 100%);mask-image:linear-gradient(90deg,#000 75%,transparent 100%);">用户定义的</div>
  <div class="abs" style="left:491px;top:590.5px;width:12px;height:12px;background:#fff;border:1px solid #7f7f7f"></div>
  <svg class="abs" style="left:40px;top:615px" width="14" height="13" viewBox="0 0 14 13"><path d="M1 4 L3.500 1.500 L12.500 1.500 L12.500 9 L10 11.500 L1 11.500Z" fill="#a9e0f7" stroke="#1f8cc4"/><path d="M1 4 H10 L12.500 1.500 M10 4 V11.500" fill="none" stroke="#1f8cc4"/><path d="M10.500 4.200 L12 2.700 V8.800 L10.500 10.300Z" fill="#6cc3ea"/></svg>
  <div class="t" style="left:61.5px;top:614.5px;color:#8c8c8c"><span class="m">PRT<i>0001</i>.PRT</span></div>
  <div class="t" style="left:135.5px;top:614.5px;width:52px;overflow:hidden;color:#8c8c8c;"><span class="m">CNOTE</span></div>
  <div class="t" style="left:192.5px;top:614.5px;color:#8c8c8c">字符串</div>
  <div class="t" style="left:248.5px;top:614.5px;width:52px;overflow:hidden;color:#222;">备注</div>
  <svg class="abs" style="left:303.5px;top:612px" width="21" height="20" viewBox="0 0 21 20"><rect x="0.500" y="6" width="9" height="6.500" fill="#444"/><path d="M2.500 6 V3.500 A2.500 2.500 0 0 1 7.500 3.500 V6" fill="none" stroke="#444" stroke-width="1.500"/><rect x="8" y="13" width="9.500" height="6" fill="#444"/><path d="M14.800 13 V9.800 A2.300 2.300 0 0 1 19.400 9.800 V12" fill="none" stroke="#444" stroke-width="1.500"/></svg>
  <div class="t" style="left:324.5px;top:615.5px;color:#222;letter-spacing:-.5px">完整</div>
  <div class="t" style="left:360.5px;top:614.5px;width:51px;overflow:hidden;color:#8c8c8c;-webkit-mask-image:linear-gradient(90deg,#000 75%,transparent 100%);mask-image:linear-gradient(90deg,#000 75%,transparent 100%);">用户定义的</div>
  <div class="abs" style="left:491px;top:615.5px;width:12px;height:12px;background:#fff;border:1px solid #7f7f7f"></div>
  <svg class="abs" style="left:40px;top:640px" width="14" height="13" viewBox="0 0 14 13"><path d="M1 4 L3.500 1.500 L12.500 1.500 L12.500 9 L10 11.500 L1 11.500Z" fill="#a9e0f7" stroke="#1f8cc4"/><path d="M1 4 H10 L12.500 1.500 M10 4 V11.500" fill="none" stroke="#1f8cc4"/><path d="M10.500 4.200 L12 2.700 V8.800 L10.500 10.300Z" fill="#6cc3ea"/></svg>
  <div class="t" style="left:61.5px;top:639.5px;color:#8c8c8c"><span class="m">PRT<i>0001</i>.PRT</span></div>
  <div class="t" style="left:135.5px;top:639.5px;width:52px;overflow:hidden;color:#8c8c8c;"><span class="m">CPROJECT</span></div>
  <div class="t" style="left:192.5px;top:639.5px;color:#8c8c8c">字符串</div>
  <div class="t" style="left:248.5px;top:639.5px;width:52px;overflow:hidden;color:#222;">项目名称</div>
  <svg class="abs" style="left:303.5px;top:637px" width="21" height="20" viewBox="0 0 21 20"><rect x="0.500" y="6" width="9" height="6.500" fill="#444"/><path d="M2.500 6 V3.500 A2.500 2.500 0 0 1 7.500 3.500 V6" fill="none" stroke="#444" stroke-width="1.500"/><rect x="8" y="13" width="9.500" height="6" fill="#444"/><path d="M14.800 13 V9.800 A2.300 2.300 0 0 1 19.400 9.800 V12" fill="none" stroke="#444" stroke-width="1.500"/></svg>
  <div class="t" style="left:324.5px;top:640.5px;color:#222;letter-spacing:-.5px">完整</div>
  <div class="t" style="left:360.5px;top:639.5px;width:51px;overflow:hidden;color:#8c8c8c;-webkit-mask-image:linear-gradient(90deg,#000 75%,transparent 100%);mask-image:linear-gradient(90deg,#000 75%,transparent 100%);">用户定义的</div>
  <div class="abs" style="left:491px;top:640.5px;width:12px;height:12px;background:#fff;border:1px solid #7f7f7f"></div>
  <svg class="abs" style="left:40px;top:665px" width="14" height="13" viewBox="0 0 14 13"><path d="M1 4 L3.500 1.500 L12.500 1.500 L12.500 9 L10 11.500 L1 11.500Z" fill="#a9e0f7" stroke="#1f8cc4"/><path d="M1 4 H10 L12.500 1.500 M10 4 V11.500" fill="none" stroke="#1f8cc4"/><path d="M10.500 4.200 L12 2.700 V8.800 L10.500 10.300Z" fill="#6cc3ea"/></svg>
  <div class="t" style="left:61.5px;top:664.5px;color:#8c8c8c"><span class="m">PRT<i>0001</i>.PRT</span></div>
  <div class="t" style="left:135.5px;top:664.5px;width:52px;overflow:hidden;color:#8c8c8c;-webkit-mask-image:linear-gradient(90deg,#000 75%,transparent 100%);mask-image:linear-gradient(90deg,#000 75%,transparent 100%);"><span class="m">PTC_MASTE</span></div>
  <div class="t" style="left:192.5px;top:664.5px;color:#8c8c8c">字符串</div>
  <div class="t" style="left:248.5px;top:664.5px;width:52px;overflow:hidden;color:#222;-webkit-mask-image:linear-gradient(90deg,#000 75%,transparent 100%);mask-image:linear-gradient(90deg,#000 75%,transparent 100%);"><span class="m">PTC_SYSTE</span></div>
  <svg class="abs" style="left:303.5px;top:662px" width="21" height="20" viewBox="0 0 21 20"><rect x="0.500" y="6" width="9" height="6.500" fill="#444"/><path d="M2.500 6 V3.500 A2.500 2.500 0 0 1 7.500 3.500 V6" fill="none" stroke="#444" stroke-width="1.500"/><rect x="8" y="13" width="9.500" height="6" fill="#444"/><path d="M14.800 13 V9.800 A2.300 2.300 0 0 1 19.400 9.800 V12" fill="none" stroke="#444" stroke-width="1.500"/></svg>
  <div class="t" style="left:324.5px;top:665.5px;color:#222;letter-spacing:-.5px">完整</div>
  <div class="t" style="left:360.5px;top:664.5px;width:51px;overflow:hidden;color:#8c8c8c;-webkit-mask-image:linear-gradient(90deg,#000 75%,transparent 100%);mask-image:linear-gradient(90deg,#000 75%,transparent 100%);">用户定义的</div>
  <div class="abs" style="left:491px;top:665.5px;width:12px;height:12px;background:#fdfdfd;border:1px solid #c9c9c9"></div>
  <svg class="abs" style="left:492px;top:666.5px" width="10" height="10" viewBox="0 0 10 10"><path d="M1.800 5 L4.200 7.800 L8.500 2" fill="none" stroke="#b5b5b5" stroke-width="1.300"/></svg>
  <svg class="abs" style="left:40px;top:690px" width="14" height="13" viewBox="0 0 14 13"><path d="M1 4 L3.500 1.500 L12.500 1.500 L12.500 9 L10 11.500 L1 11.500Z" fill="#a9e0f7" stroke="#1f8cc4"/><path d="M1 4 H10 L12.500 1.500 M10 4 V11.500" fill="none" stroke="#1f8cc4"/><path d="M10.500 4.200 L12 2.700 V8.800 L10.500 10.300Z" fill="#6cc3ea"/></svg>
  <div class="t" style="left:61.5px;top:689.5px;color:#8c8c8c"><span class="m">PRT<i>0001</i>.PRT</span></div>
  <div class="t" style="left:135.5px;top:689.5px;width:52px;overflow:hidden;color:#8c8c8c;-webkit-mask-image:linear-gradient(90deg,#000 75%,transparent 100%);mask-image:linear-gradient(90deg,#000 75%,transparent 100%);"><span class="m">PTC_REPOR</span></div>
  <div class="t" style="left:192.5px;top:689.5px;color:#8c8c8c">字符串</div>
  <div class="t" style="left:246.500px;top:689.5px;width:52px;overflow:hidden;color:#222;"><b style="color:#1763a6;font-style:italic">列表</b></div>
  <svg class="abs" style="left:306px;top:690.5px" width="12" height="14" viewBox="0 0 12 14"><rect x="0.500" y="6" width="11" height="7.500" rx=".6" fill="#454545"/><path d="M2.800 6 V3.800 A3.200 3.200 0 0 1 9.200 3.800 V6" fill="none" stroke="#454545" stroke-width="1.700"/></svg>
  <div class="t" style="left:320.5px;top:690.5px;color:#8c8c8c">锁定</div>
  <div class="t" style="left:360.5px;top:689.5px;width:51px;overflow:hidden;color:#8c8c8c;-webkit-mask-image:linear-gradient(90deg,#000 75%,transparent 100%);mask-image:linear-gradient(90deg,#000 75%,transparent 100%);"><span class="m">Creo Parametric</span></div>
  <div class="abs" style="left:491px;top:690.5px;width:12px;height:12px;background:#fdfdfd;border:1px solid #dadada"></div>
  <div class="abs" style="left:21px;top:709px;width:16px;height:25.5px;background:#b3b3b3"></div>
  <div class="abs" style="left:37px;top:709.5px;width:488px;height:25px;background:#afe1fc"></div>
  <div class="abs" style="left:132px;top:709.5px;width:1px;height:25px;background:#d5eefc"></div>
  <div class="abs" style="left:188px;top:709.5px;width:1px;height:25px;background:#d5eefc"></div>
  <div class="abs" style="left:244px;top:709.5px;width:1px;height:25px;background:#d5eefc"></div>
  <div class="abs" style="left:300px;top:709.5px;width:1px;height:25px;background:#d5eefc"></div>
  <div class="abs" style="left:356px;top:709.5px;width:1px;height:25px;background:#d5eefc"></div>
  <div class="abs" style="left:412px;top:709.5px;width:1px;height:25px;background:#d5eefc"></div>
  <div class="abs" style="left:468px;top:709.5px;width:1px;height:25px;background:#d5eefc"></div>
  <div class="abs" style="left:524px;top:709.5px;width:1px;height:25px;background:#d5eefc"></div>
  <svg class="abs" style="left:40px;top:712.5px" width="17" height="18" viewBox="0 0 17 18"><g stroke="#9a6a1e" stroke-width="1.300" fill="none"><path d="M1.500 2.500 L6 7 M6 2.500 L1.500 7"/><path d="M11.500 1 L9.500 5.500 M9 7.500 L7.500 11"/></g><rect x="0.500" y="11.500" width="14.500" height="5" fill="#fff" stroke="#8a8a8a"/><path d="M3 14v2.500M5.500 14v2.500M8 14v2.500M10.500 14v2.500M13 14v2.500" stroke="#8a8a8a" stroke-width="1"/></svg>
  <div class="t" style="left:61.5px;top:714.5px;color:#222"><span class="m">A</span></div>
  <div class="t" style="left:135.5px;top:714.5px;color:#222"><span class="m">LENGTH</span></div>
  <div class="t" style="left:192.5px;top:714.5px;color:#222">实数</div>
  <div class="t" style="left:248px;top:714.5px;width:52px;overflow:hidden;color:#222;-webkit-mask-image:linear-gradient(90deg,#000 75%,transparent 100%);mask-image:linear-gradient(90deg,#000 75%,transparent 100%);"><span class="m">286.226144</span></div>
  <svg class="abs" style="left:306px;top:715.5px" width="12" height="14" viewBox="0 0 12 14"><rect x="0.500" y="6" width="11" height="7.500" rx=".6" fill="#454545"/><path d="M2.800 6 V3.800 A3.200 3.200 0 0 1 9.200 3.800 V6" fill="none" stroke="#454545" stroke-width="1.700"/></svg>
  <div class="t" style="left:320.5px;top:715.5px;color:#444">锁定</div>
  <div class="t" style="left:360.5px;top:714.5px;color:#222">分析特征</div>
  <div class="abs" style="left:491px;top:715.5px;width:12px;height:12px;background:#bfe6fb;border:1px solid #a9cfe4"></div>
  <div class="abs" style="left:576px;top:534.5px;width:15px;height:216.5px;background:#fafafa;border-left:1px solid #cfcfcf;border-right:1px solid #cfcfcf"></div>
  <div class="abs" style="left:577px;top:535px;width:13px;height:14px;background:#f4f4f4"></div>
  <svg class="abs" style="left:579.5px;top:539px" width="8" height="5" viewBox="0 0 8 5"><path d="M0 4.500H7.500L3.750 0.500Z" fill="#a5a5a5"/></svg>
  <div class="abs" style="left:577px;top:549px;width:13px;height:22.5px;background:#e0e0e0"></div>
  <div class="abs" style="left:577px;top:734.5px;width:13px;height:15.5px;background:#f4f4f4;border-top:1px solid #d8d8d8"></div>
  <svg class="abs" style="left:579.5px;top:740px" width="8" height="5" viewBox="0 0 8 5"><path d="M0 0.500H7.500L3.750 4.500Z" fill="#a5a5a5"/></svg>
  <svg class="abs" style="left:598px;top:614px" width="14" height="14" viewBox="0 0 14 14"><path d="M7 0.500 L13 7 H9.500 V13.500 H4.500 V7 H1Z" fill="#a9a9a9"/></svg>
  <svg class="abs" style="left:598px;top:639px" width="14" height="14" viewBox="0 0 14 14"><path d="M7 13.500 L13 7 H9.500 V0.500 H4.500 V7 H1Z" fill="#a9a9a9"/></svg>
  <div class="abs" style="left:19px;top:752.500px;width:28px;height:27px;background:#f9f9f9;border:1px solid #b9b9b9"></div>
  <svg class="abs" style="left:26px;top:759px" width="14" height="14" viewBox="0 0 14 14"><path d="M5.200 0 H8.800 V5.200 H14 V8.800 H8.800 V14 H5.200 V8.800 H0 V5.200 H5.200Z" fill="#3a3a3a"/></svg>
  <div class="abs" style="left:51px;top:752.5px;width:28px;height:27px;background:#e4e5e7;border:1px solid #d3d4d6"></div>
  <div class="abs" style="left:58px;top:764px;width:14px;height:4px;background:#9b9b9b"></div>
  <div class="btn" style="left:488.5px;top:754.5px;width:61px;height:19.5px;line-height:17px;letter-spacing:1px;color:#333">属性...</div>
  <div class="btn" style="left:555.5px;top:752.5px;width:27.5px;height:27px;"></div>
  <svg class="abs" style="left:560px;top:758px" width="18" height="16" viewBox="0 0 18 16"><rect x="0.500" y="0.500" width="16" height="14" fill="#fff" stroke="#8d8d8d"/><path d="M0.500 3.500H16.500M5.500 0.500V14.500M11 0.500V14.500" stroke="#8d8d8d"/><rect x="8" y="3" width="4" height="12" fill="#2a9bd6"/><rect x="9.200" y="5" width="1.600" height="9" fill="#bfe4f6"/></svg>
  <div class="btn" style="left:586.5px;top:752.5px;width:27.5px;height:27px;"></div>
  <svg class="abs" style="left:590px;top:757px" width="21" height="18" viewBox="0 0 21 18"><defs><linearGradient id="bn" x1="0" x2="1"><stop offset="0" stop-color="#222"/><stop offset=".5" stop-color="#888"/><stop offset="1" stop-color="#222"/></linearGradient></defs><path d="M1 17 L2.500 7 L4 1.500 H8 L9 7 V17Z" fill="url(#bn)"/><path d="M11.500 17 V7 L12.500 1.500 H16.500 L18 7 L19.500 17Z" fill="url(#bn)"/><rect x="8.500" y="5" width="3.500" height="5" fill="#333"/><rect x="1" y="15" width="8" height="2.500" fill="#111"/><rect x="11.500" y="15" width="8" height="2.500" fill="#111"/></svg>
  <div class="abs" style="left:2px;top:804px;width:632px;height:1px;background:#c6c8c9"></div>
  <div class="btn" style="left:11px;top:815px;width:68px;height:20px;background:#e5e6e8;border-color:#d2d3d5;color:#b0b0b0;line-height:18px;letter-spacing:1px">重置</div>
  <div class="btn" style="left:481px;top:815px;width:68px;height:20px;background:#ade0fb;border-color:#72bfe9;color:#333;line-height:18px;letter-spacing:1px">确定</div>
  <div class="btn" style="left:557px;top:815px;width:68px;height:20px;line-height:18px;letter-spacing:1px">取消</div>
</div></div>

<!-- ================= ANNOTATIONS ================= -->
<svg id="anno" class="abs" style="left:0;top:0" width="1897" height="901" viewBox="0 0 1897 901">
  <g fill="none" stroke="#ea1b28" stroke-width="2">
    <rect x="7.300" y="155.300" width="162" height="23.100"/>
    <rect x="1219" y="206.200" width="248.800" height="70.600"/>
  </g>
  <path d="M280.1 164.3 L1184.4 238.0 L1181.4 233.1 L1196.6 241.6 L1180.3 247.5 L1183.9 243.2 L279.9 167.7Z" fill="#ea1b28"/>
  <circle cx="280" cy="166" r="1.750" fill="#ea1b28"/>
</svg>

<!-- ================= WATERMARK ================= -->
<div id="wm"><svg class="abs" style="left:1700px;top:810px" width="197" height="91" viewBox="0 0 197 91"><title>野火论坛 www.proewildfire.cn</title><g fill="none" stroke="#ff6a3c" stroke-width="2" stroke-linecap="round" stroke-linejoin="round"><path d="M21 32 L34 32 L31.5 44 L18.5 44 L21 32"/><path d="M19.7 38 L32.8 38"/><path d="M27.8 32 L22.3 60"/><path d="M15 52 L31 52"/><path d="M11.5 60.5 L31 58.5"/><path d="M40 33 L52 33 L45.5 40"/><path d="M45 39 L49 42.5"/><path d="M37.5 45 L52.5 45 L48.5 50"/><path d="M60.5 36.5 L67 46.5"/><path d="M45.500 45 L43 60 Q42.500 63.500 38.500 63.500 L31.500 63"/><path d="M77.500 30 C76 44 70 56 54 63"/><path d="M74.500 47 C77 54 81 59 88 62.500"/></g><path d="M80.500 6.700 C92 16 96 27 92 36 C89.500 42 85 46.500 81 47.300 C79.500 47.300 78 46 77.500 44 C83 40 86.500 33 86 27 C85.500 32 83.500 35 82 36 C83 30 81.500 22 76.500 15 C82 18 87 24 87.500 28 C88 20 86 13 80.500 6.700Z" fill="#ff6a3c"/><g fill="none" stroke="#0a0a0a" stroke-width="2" stroke-linecap="round" stroke-linejoin="round"><path d="M104.5 30.5 L110.5 36.5"/><path d="M99.5 42.5 L108.5 42.5 L103 61.5 L112.5 53.5"/><path d="M124.5 29 L111 46"/><path d="M124.5 29 L135 43.5"/><path d="M127 45.5 L116.5 51"/><path d="M115.500 44 L112.500 57 Q112 60.500 116 60.500 L126.500 60.500 Q129 60.500 129 57.500"/><path d="M143 40.5 L156 40.5"/><path d="M151 29.5 L146.5 56"/><path d="M139 58 L157 54"/><path d="M157.5 33 L177 33"/><path d="M153.5 43.5 L177.5 43.5"/><path d="M166.5 43.5 L156.5 59 L173 58.5"/><path d="M168 50.5 L176.5 62"/></g><text x="13.500" y="79.500" font-family="Liberation Sans, sans-serif" font-style="italic" font-size="15.500" fill="#8f8f8f" textLength="159" lengthAdjust="spacing">www.proewildfire.cn</text></svg></div>

</body>
</html>
